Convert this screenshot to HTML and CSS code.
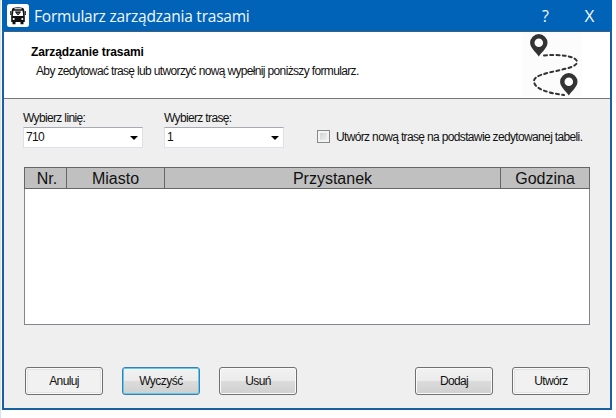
FILE: index.html
```html
<!DOCTYPE html>
<html lang="pl">
<head>
<meta charset="utf-8">
<title>Formularz zarządzania trasami</title>
<link rel="stylesheet" href="styles.css">
</head>
<body>
<main class="window">
  <header class="titlebar">
    <svg class="app-icon" viewBox="0 0 22 23">
      <rect width="22" height="23" rx="2.5" fill="#fff"/>
      <path fill="#111" d="M6 4Q11 2.3 16 4Q17 4.4 17.2 6L17.8 12.5V18H16.5V20.2H13.5V18H8.5V20.2H5.5V18H4.2V12.5L4.8 6Q5 4.4 6 4Z"/>
      <path d="M3.8 7V11M18.2 7V11" stroke="#111" stroke-width="1.2"/>
      <path fill="#fff" d="M7.5 4.3H14.5V5.3H7.5ZM6.4 6.7H15.6L16.2 12H5.8Z"/>
      <path fill="none" stroke="#222" stroke-width="1" d="M8.7 7.2L11 11L13.3 7.2M8.5 8.5H13.5"/>
      <circle cx="11" cy="8.7" r="1.7" fill="none" stroke="#222" stroke-width=".8"/>
      <circle cx="6.7" cy="15" r="1.1" fill="#fff"/><circle cx="15.3" cy="15" r="1.1" fill="#fff"/>
    </svg>
    <h1 class="title">Formularz zarządzania trasami</h1>
    <button class="caption help">?</button>
    <button class="caption close">X</button>
  </header>
  <section class="banner">
    <div class="banner-text">
      <h2 class="heading">Zarządzanie trasami</h2>
      <p class="hint">Aby zedytować trasę lub utworzyć nową wypełnij poniższy formularz.</p>
    </div>
    <svg class="route" viewBox="0 0 64 66">
      <rect x="2" width="60" height="64" fill="#fcfcfc"/>
      <path d="M24 23.5C39 22 57 24 57 30C57 39 14 39 14 49C14 57 28 61 44 63" fill="none" stroke="#333" stroke-width="2" stroke-dasharray="3 3.2" stroke-linecap="round"/>
      <path id="pin" fill="#333" fill-rule="evenodd" d="M18.8 24.5C15.1 19.5 10.1 15.5 10.1 10.8A8.7 8.7 0 0 1 27.5 10.8C27.5 15.5 22.5 19.5 18.8 24.5ZM18.8 6.5A4.3 4.3 0 1 0 18.8 15.1A4.3 4.3 0 1 0 18.8 6.5Z"/>
      <use href="#pin" x="30" y="39"/>
    </svg>
  </section>
  <section class="filters">
    <div class="field">
      <span class="label">Wybierz linię:</span>
      <div class="select"><span>710</span><svg class="arrow" viewBox="0 0 8 4"><path d="M0 0H8L4 4Z"/></svg></div>
    </div>
    <div class="field">
      <span class="label">Wybierz trasę:</span>
      <div class="select"><span>1</span><svg class="arrow" viewBox="0 0 8 4"><path d="M0 0H8L4 4Z"/></svg></div>
    </div>
    <div class="check"><span class="box"></span><span class="check-label">Utwórz nową trasę na podstawie zedytowanej tabeli.</span></div>
  </section>
  <section class="table">
    <div class="row">
      <span class="cell">Nr.</span><span class="cell">Miasto</span><span class="cell">Przystanek</span><span class="cell">Godzina</span>
    </div>
  </section>
  <footer class="actions">
    <button class="btn flat">Anuluj</button>
    <button class="btn focus">Wyczyść</button>
    <button class="btn">Usuń</button>
    <button class="btn push">Dodaj</button>
    <button class="btn flat">Utwórz</button>
  </footer>
</main>
</body>
</html>
```
FILE: styles.css
```css
* { box-sizing: border-box; }
body {
  margin: 0;
  height: 418px;
  padding-left: 2px;
  overflow: hidden;
  background: linear-gradient(90deg, #d3e5f2 1px, #fff 1px);
  font: 12px/14px "Liberation Sans", Arial, sans-serif;
  letter-spacing: -.65px;
  color: #111;
}
h1, h2, p { margin: 0; font-weight: normal; }
button { font: inherit; color: inherit; padding: 0; letter-spacing: inherit; }
.window {
  width: 610px;
  height: 410px;
  border: 2px solid #1a5f9f;
  border-top: 0;
  background: #efefef;
}
.titlebar {
  display: flex;
  align-items: center;
  height: 32px;
  margin: 0 -2px;
  padding-left: 5px;
  background: #0063b8;
  border-bottom: 1px solid #3f5f7c;
  color: #f2f8ff;
}
.app-icon { width: 22px; height: 23px; }
.title {
  flex: 1;
  margin-left: 5px;
  font: 15.5px/20px "Open Sans", sans-serif;
  letter-spacing: -.22px;
  white-space: nowrap;
}
.caption {
  width: 44px;
  border: 0;
  background: none;
  font: 16px/20px "Open Sans", sans-serif;
  letter-spacing: 0;
}
.help { padding-right: 1px; }
.close { font-size: 17px; padding-right: 1px; }
.banner {
  display: flex;
  justify-content: space-between;
  height: 67px;
  padding-left: 27px;
  background: #fff;
  border-bottom: 1px solid #777;
}
.banner-text { padding-top: 13px; }
.heading { font-size: 12px; line-height: 14px; font-weight: bold; letter-spacing: -.1px; color: #000; }
.hint { margin: 5px 0 0 5px; white-space: nowrap; }
.route { width: 64px; height: 66px; margin-right: 26px; }
.filters { display: flex; padding: 12px 0 0 19px; height: 68px; }
.field { width: 141px; }
.label { display: block; white-space: nowrap; }
.select {
  display: flex;
  align-items: center;
  justify-content: space-between;
  width: 120px;
  height: 21px;
  margin-top: 2px;
  padding: 0 4px 2px 2px;
  border: 1px solid #dce1e8;
  border-top-color: #a8abb2;
  background: #fff;
  letter-spacing: -.65px;
}
.arrow { width: 8px; height: 4px; margin-top: 3px; }
.check { display: flex; align-items: center; height: 15px; margin: 18px 0 0 12px; }
.box {
  width: 13px;
  height: 13px;
  border: 1px solid #888;
  background: linear-gradient(135deg, #c8ccd0, #f6f6f6);
  box-shadow: inset 0 0 0 2px #f3f3f3;
}
.check-label { margin-left: 6px; white-space: nowrap; }
.table {
  width: 566px;
  height: 158px;
  margin-left: 20px;
  border: 1px solid #828589;
  background: #fff;
}
.row {
  display: grid;
  grid-template-columns: 41px 98px 336px 1fr;
  height: 22px;
  margin: -1px -1px 0;
  border: 1px solid #666;
  background: #c0c0c0;
}
.cell { font-size: 16px; line-height: 21px; text-align: center; letter-spacing: 0; }
.cell:first-child { padding-left: 3px; }
.cell + .cell { border-left: 1px solid #666; }
.actions { display: flex; gap: 19px; padding: 42px 0 0 21px; }
.btn {
  width: 78px;
  height: 28px;
  border: 1px solid #707070;
  border-radius: 3px;
  background: linear-gradient(#f2f2f2, #ebebeb 48%, #dcdcdc 50%, #cfcfcf);
  box-shadow: inset 0 0 0 1px #fafafa;
}
.btn.flat { background: #f1f1f1; box-shadow: inset 0 0 0 1px #fafafa, inset 0 0 0 2px #e3e3e3; }
.btn.focus { border-color: #3c7fb1; box-shadow: inset 0 0 0 1px #5fcbe8; letter-spacing: -.5px; }
.btn.push { margin-left: 99px; }
```
